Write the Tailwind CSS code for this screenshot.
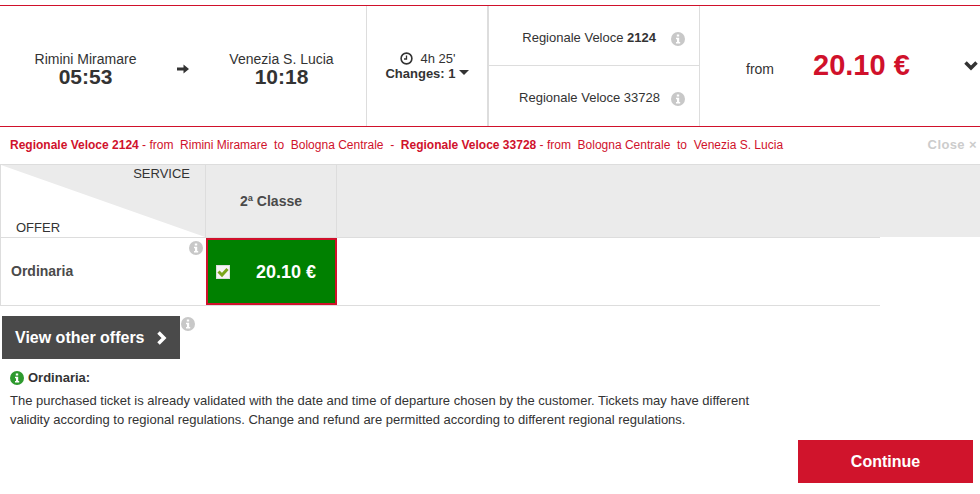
<!DOCTYPE html>
<html lang="en">
<head>
  <meta charset="UTF-8">
  <title>Ticket offers</title>
  <script src="https://cdn.jsdelivr.net/npm/@tailwindcss/browser@4"></script>
</head>
<body class="bg-white text-[#333] font-['Liberation_Sans',Arial,sans-serif] w-[980px] h-[494px] overflow-hidden">
  <!-- Solution row -->
  <div class="mt-[5px] h-[122px] flex border-y border-[#d0112b]">
    <div class="w-[366px] flex items-center">
      <div class="w-[171px] text-center pt-[6px]">
        <div class="text-sm leading-[15px]">Rimini Miramare</div>
        <div class="text-[21px] leading-[20px] font-bold">05:53</div>
      </div>
      <svg class="w-3 h-3 ml-[6px] mt-[6px]" viewBox="0 0 12 12"><path d="M0 4.500h6.500V1.500L12 6l-5.500 4.500V7.500H0z" fill="#333"/></svg>
      <div class="w-[165px] ml-[10px] text-center pt-[6px]">
        <div class="text-sm leading-[15px]">Venezia S. Lucia</div>
        <div class="text-[21px] leading-[20px] font-bold">10:18</div>
      </div>
    </div>
    <div class="w-[121px] border-l border-[#ddd] flex flex-col items-center justify-center">
      <div class="flex items-center gap-[7px] text-[13px] leading-[15px] pl-[2px]">
        <svg class="w-[13px] h-[13px]" viewBox="0 0 13 13" fill="none" stroke="#333"><circle cx="6.500" cy="6.500" r="5.400" stroke-width="1.600"/><path d="M6.500 3.500v3.500h-2.500" stroke-width="1.300"/></svg>
        <span>4h 25'</span>
      </div>
      <div class="flex items-center text-[13px] leading-[15px] font-bold">Changes: 1<span class="ml-[3px] mb-[2px] border-x-[5px] border-x-transparent border-t-[5px] border-t-[#333]"></span></div>
    </div>
    <div class="w-[212px] border-l-2 border-[#ddd] flex flex-col">
      <div class="h-[60px] border-b border-[#ddd] flex items-center justify-end pr-[14px] pt-[4px] text-[13px]">
        <span>Regionale Veloce <b>2124</b></span>
        <svg class="w-[14px] h-[14px] ml-[15px] mt-[2px]" viewBox="0 0 14 14"><circle cx="7" cy="7" r="7" fill="#c8c8c8"/><path d="M5.800 2.500h2.400v2H5.800zM5 5.800h3.200v4.200h1v1.500H5V10h1V7.300H5z" fill="#fff"/></svg>
      </div>
      <div class="flex-1 flex items-center justify-end pr-[14px] pt-[4px] text-[13px]">
        <span>Regionale Veloce 33728</span>
        <svg class="w-[14px] h-[14px] ml-[11px] mt-[2px]" viewBox="0 0 14 14"><circle cx="7" cy="7" r="7" fill="#c8c8c8"/><path d="M5.800 2.500h2.400v2H5.800zM5 5.800h3.200v4.200h1v1.500H5V10h1V7.300H5z" fill="#fff"/></svg>
      </div>
    </div>
    <div class="flex-1 border-l border-[#ddd] flex items-center">
      <span class="ml-[46px] mt-[6px] text-sm w-[67px]">from</span>
      <span class="text-[29px] leading-none font-bold text-[#d0112b] mb-[2px]">20.10 €</span>
      <svg class="w-[14px] h-[10px] ml-[54px]" viewBox="0 0 14 10" fill="none" stroke="#333" stroke-width="3.500"><path d="M1.500 1.500l5.500 5.500 5.500-5.500"/></svg>
    </div>
  </div>

  <!-- Train details line -->
  <div class="h-[37px] flex items-center justify-between pl-[10px] pr-[3px] pb-[1px] text-xs text-[#d0112b] whitespace-pre">
    <div><b>Regionale Veloce 2124</b> - from  Rimini Miramare  to  Bologna Centrale  -  <b>Regionale Veloce 33728</b> - from  Bologna Centrale  to  Venezia S. Lucia</div>
    <div class="font-bold text-[13px] text-[#ccc] tracking-[0.4px]">Close ×</div>
  </div>

  <!-- Offer table -->
  <div class="w-[980px] border-t border-[#ddd]">
    <div class="flex h-[72px] bg-[#ebebeb] border-l border-[#ddd]">
      <div class="relative w-[204px] text-[13px] leading-[15px]">
        <svg class="absolute inset-0 w-full h-full" viewBox="0 0 204 72" preserveAspectRatio="none"><polygon points="0,0 204,72 0,72" fill="#fff"/></svg>
        <span class="absolute right-[15px] top-[1px]">SERVICE</span>
        <span class="absolute left-[15px] bottom-[2px]">OFFER</span>
      </div>
      <div class="w-[132px] border-x border-[#ddd] flex items-center justify-center text-sm font-bold text-[#4a4a4a]">2ª Classe</div>
    </div>
    <div class="w-[880px] h-[69px] flex border-y border-l border-[#ddd]">
      <div class="relative w-[204px] pl-[10px] pb-[2px] flex items-center text-sm font-bold text-[#4a4a4a]">
        Ordinaria
        <svg class="absolute right-[2px] top-[3px] w-[14px] h-[14px]" viewBox="0 0 14 14"><circle cx="7" cy="7" r="7" fill="#c8c8c8"/><path d="M5.800 2.500h2.400v2H5.800zM5 5.800h3.200v4.200h1v1.500H5V10h1V7.300H5z" fill="#fff"/></svg>
      </div>
      <div class="w-[131px] bg-[#008000] border-2 border-[#d0112b] flex items-center pl-[8px] ml-[1px]">
        <svg class="w-[14px] h-[14px] mt-[1px]" viewBox="0 0 14 14"><rect x="0.500" y="0.500" width="13" height="13" fill="#f5f5f5" stroke="#dcdcdc"/><path d="M2.500 6.500l3.500 3.500 5.500-6" fill="none" stroke="#7aa51a" stroke-width="3"/></svg>
        <span class="ml-[26px] text-lg font-bold text-white">20.10 €</span>
      </div>
    </div>
  </div>

  <!-- Other offers -->
  <div class="flex items-start mt-[10px] ml-[2px]">
    <button class="w-[178px] h-[43px] bg-[#4a4a4a] text-white text-base font-bold flex items-center pl-[13px]">
      View other offers
      <svg class="w-[11px] h-[14px] ml-[11px]" viewBox="0 0 11 14" fill="none" stroke="#fff" stroke-width="3.500"><path d="M2.500 1.500L8 7l-5.500 5.500"/></svg>
    </button>
    <svg class="w-[14px] h-[14px] ml-[1px] mt-[1px]" viewBox="0 0 14 14"><circle cx="7" cy="7" r="7" fill="#c8c8c8"/><path d="M5.800 2.500h2.400v2H5.800zM5 5.800h3.200v4.200h1v1.500H5V10h1V7.300H5z" fill="#fff"/></svg>
  </div>

  <!-- Offer description -->
  <div class="mt-[10px] ml-[10px] w-[760px] text-[13px]">
    <div class="flex items-center font-bold leading-[18px]">
      <svg class="w-[14px] h-[14px] mr-[4px]" viewBox="0 0 14 14"><circle cx="7" cy="7" r="7" fill="#2e9a2e"/><path d="M5.800 2.500h2.400v2H5.800zM5 5.800h3.200v4.200h1v1.500H5V10h1V7.300H5z" fill="#fff"/></svg>
      Ordinaria:
    </div>
    <p class="mt-[5px] leading-[18.500px]">The purchased ticket is already validated with the date and time of departure chosen by the customer. Tickets may have different validity according to regional regulations. Change and refund are permitted according to different regional regulations.</p>
  </div>

  <!-- Continue -->
  <div class="flex justify-end pr-[7px] mt-[11px]">
    <button class="w-[175px] h-[43px] bg-[#d0142c] text-white text-base font-bold">Continue</button>
  </div>
</body>
</html>
